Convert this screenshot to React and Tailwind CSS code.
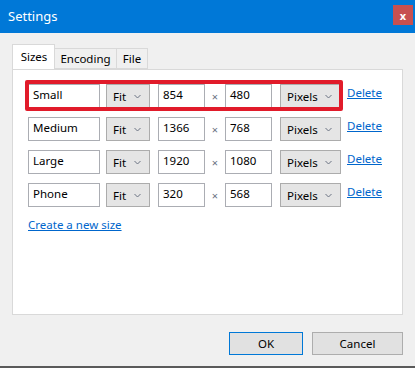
// Settings dialog: sizes tab with the first row highlighted

const font = { fontFamily: '"Segoe UI", "Noto Sans", "Open Sans", sans-serif' };

const rows = [
  { name: "Small", w: "854", h: "480" },
  { name: "Medium", w: "1366", h: "768" },
  { name: "Large", w: "1920", h: "1080" },
  { name: "Phone", w: "320", h: "568" },
];

function Chevron() {
  return (
    <svg width="7" height="5" viewBox="0 0 7 5" className="text-gray-500">
      <path d="M0.5 1 L3.5 4 L6.5 1" fill="none" stroke="currentColor" strokeWidth="1" />
    </svg>
  );
}

function TextBox({ value, width }) {
  return (
    <div
      className={`${width} h-[24px] border border-[#abadb3] bg-white px-[4px] pt-[1px] text-[11.5px] leading-[18px] text-black`}
    >
      {value}
    </div>
  );
}

function Select({ value, width }) {
  return (
    <div
      className={`${width} h-[24px] border border-[#acacac] bg-[#e5e5e5] flex items-center justify-between pl-[6px] pr-[8px] text-[11.5px] text-black`}
    >
      <span className="pt-[2px]">{value}</span>
      <Chevron />
    </div>
  );
}

function SizeRow({ row, highlight }) {
  return (
    <div className="relative flex items-center">
      <TextBox value={row.name} width="w-[72px]" />
      <div className="w-[6px]" />
      <Select value="Fit" width="w-[44px]" />
      <div className="w-[8px]" />
      <TextBox value={row.w} width="w-[47px]" />
      <div className="w-[20px] text-center text-[11px] text-gray-500 pt-[3px]">×</div>
      <TextBox value={row.h} width="w-[47px]" />
      <div className="w-[8px]" />
      <Select value="Pixels" width="w-[61px]" />
      <a className="ml-[6px] text-[11.5px] text-[#0066cc] underline -mt-[6px]">Delete</a>
      {highlight && (
        <div className="absolute left-[-3px] top-[-4px] w-[318px] h-[31px] border-[4px] border-[#e11b2a] rounded-[2px] pointer-events-none" />
      )}
    </div>
  );
}

export default function App() {
  return (
    <div className="w-[415px] h-[368px] bg-[#f0f0f0] flex flex-col border-b-[2px] border-[#5a5a5a]" style={font}>
      {/** TITLE BAR */}
      <div className="h-[33px] bg-[#0078d7] flex items-center justify-between pl-[8px] pr-[2px]">
        <span className="text-white text-[13px] leading-none -mt-[1px]">Settings</span>
        <div className="w-[20px] h-[20px] bg-[#c75050] flex items-center justify-center text-white text-[11px] font-bold leading-none -mt-[3px]">
          x
        </div>
      </div>

      {/** TABS */}
      <div className="pl-[12px] pr-[12px] pt-[12px] flex-1 flex flex-col">
        <div className="flex items-end h-[24px] text-[11.5px] text-black">
          <div className="h-[25px] w-[43px] bg-white border border-[#d9d9d9] border-b-0 flex items-center justify-center relative z-10 pl-[1px]">
            Sizes
          </div>
          <div className="h-[21px] w-[62px] bg-[#f0f0f0] border border-[#d9d9d9] border-l-0 flex items-center justify-center">
            Encoding
          </div>
          <div className="h-[21px] w-[31px] bg-[#f0f0f0] border border-[#d9d9d9] border-l-0 flex items-center justify-center">
            File
          </div>
        </div>

        {/** PANEL */}
        <div className="w-[391px] h-[246px] bg-white border border-[#d9d9d9] pl-[15px] pt-[14px]">
          <div className="flex flex-col gap-[9px]">
            {rows.map((row, i) => (
              <SizeRow key={row.name} row={row} highlight={i === 0} />
            ))}
          </div>
          <a className="block mt-[9px] text-[11.5px] text-[#0066cc] underline">Create a new size</a>
        </div>

        {/** BUTTONS */}
        <div className="flex justify-end gap-[9px] mt-[17px]">
          <button className="w-[74px] h-[23px] bg-[#e1e1e1] border border-[#0078d7] text-[11.5px] text-black">
            OK
          </button>
          <button className="w-[91px] h-[23px] bg-[#e1e1e1] border border-[#adadad] text-[11.5px] text-black">
            Cancel
          </button>
        </div>
      </div>
    </div>
  );
}
